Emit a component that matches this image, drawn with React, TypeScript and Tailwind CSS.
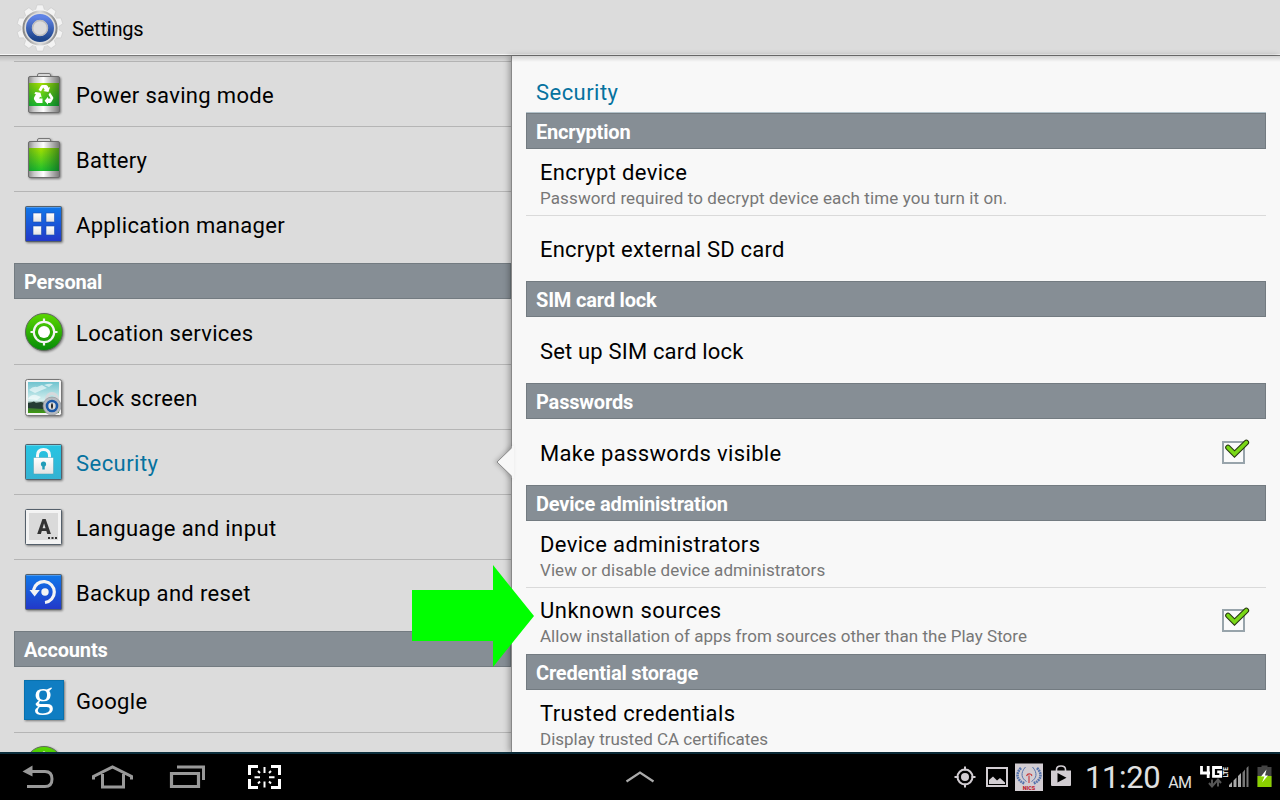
import type { ReactNode } from 'react';

const Shadow = ({ children }: { children: ReactNode }) => (
  <svg viewBox="0 0 44 48" className="h-12 w-11 shrink-0 overflow-visible drop-shadow-[1px_1px_1px_rgba(0,0,0,0.45)]">
    <defs>
      <linearGradient id="metal" x1="0" x2="1" y1="0" y2="0">
        <stop offset="0" stopColor="#8c8c8c" /><stop offset=".18" stopColor="#c9c9c9" /><stop offset=".48" stopColor="#fff" />
        <stop offset=".75" stopColor="#b5b5b5" /><stop offset="1" stopColor="#777" />
      </linearGradient>
      <linearGradient id="charge" x1="0" x2="0" y1="0" y2="1">
        <stop offset="0" stopColor="#a5e000" /><stop offset="1" stopColor="#1cc02c" />
      </linearGradient>
      <linearGradient id="chargeShade" x1="0" x2="1" y1="0" y2="0">
        <stop offset="0" stopColor="#063" stopOpacity=".35" /><stop offset=".4" stopColor="#063" stopOpacity="0" /><stop offset="1" stopColor="#042" stopOpacity=".55" />
      </linearGradient>
      <linearGradient id="blue" x1="0" x2="0" y1="0" y2="1">
        <stop offset="0" stopColor="#0f78ea" /><stop offset="1" stopColor="#2338c8" />
      </linearGradient>
      <linearGradient id="green" x1="0" x2="0" y1="0" y2="1">
        <stop offset="0" stopColor="#5bd800" /><stop offset="1" stopColor="#048a08" />
      </linearGradient>
      <linearGradient id="cyan" x1="0" x2="0" y1="0" y2="1">
        <stop offset="0" stopColor="#26c5e3" /><stop offset="1" stopColor="#35b2d2" />
      </linearGradient>
      <linearGradient id="white" x1="0" x2="0" y1="0" y2="1">
        <stop offset="0" stopColor="#fff" /><stop offset="1" stopColor="#e2e2e2" />
      </linearGradient>
      <linearGradient id="sky" x1="0" x2="0" y1="0" y2="1">
        <stop offset="0" stopColor="#6fc3cf" /><stop offset=".6" stopColor="#d8f0ef" /><stop offset=".72" stopColor="#3c5a49" /><stop offset="1" stopColor="#3f9c12" />
      </linearGradient>
    </defs>
    {children}
  </svg>
);

const BatteryIcon = ({ saver = false }: { saver?: boolean }) => (
  <Shadow>
    <path d="M15.500 5V3q0-1.500 1.500-1.500h10q1.500 0 1.500 1.500V5" fill="#d8d8d8" stroke="#777" />
    <rect x="6.500" y="4.500" width="31" height="36" rx="1.500" fill="url(#metal)" stroke="#6d6d6d" />
    <rect x="7" y="11" width="30" height="23" fill="url(#charge)" />
    <rect x="7" y="11" width="30" height="23" fill="url(#chargeShade)" />
    {saver && (
      <g fill="#fff">
        <path d="M16.500 18l2.300-4q.7-1 1.800-1h3.200q1.200 0 1.800 1l1 1.700 1.500-.8-1.700 5-5.200-1 1.600-.9-1.600-2.500-2.200 4z" />
        <path d="M28 20.500l3 4.400q.7 1 0 2.200l-1.700 2.900q-.6 1-1.800 1H26v1.700l-3.400-4L26 24.800v1.700h2.700l-2.200-3.800z" />
        <path d="M13.500 20l5 .7 1.200 4.900-1.600-.9-1 1.800h3.400v4.600h-5q-1.200 0-1.800-1l-1.600-2.700q-.5-1 .1-2.100l1.700-3-1.600-.9z" />
      </g>
    )}
  </Shadow>
);

const Tile = ({ fill, children }: { fill: string; children?: ReactNode }) => (
  <Shadow>
    <rect x="3.500" y="4.500" width="36" height="35" rx="1" fill={fill} stroke="#55606b" />
    <path d="M4.500 5.500h34" stroke="#fff" strokeOpacity=".25" />
    {children}
  </Shadow>
);

const AppsIcon = () => (
  <Tile fill="url(#blue)">
    <g fill="url(#white)" stroke="#1a4fb0" strokeWidth=".6">
      <rect x="11" y="11" width="8.500" height="9" /><rect x="24" y="11" width="8.500" height="9" />
      <rect x="11" y="24" width="8.500" height="9" /><rect x="24" y="24" width="8.500" height="9" />
    </g>
  </Tile>
);

const LocationIcon = () => (
  <Shadow>
    <circle cx="22" cy="22" r="18.500" fill="url(#green)" stroke="#5d6b5b" />
    <g fill="none" stroke="#f4f4f4" strokeWidth="2.200">
      <circle cx="22" cy="22" r="10.200" />
      <path d="M22 8.500v4M22 31.500v4M8.500 22h4M31.500 22h4" />
    </g>
    <circle cx="22" cy="22" r="6" fill="#fff" />
  </Shadow>
);

const LockScreenIcon = () => (
  <Shadow>
    <rect x="3.500" y="4.500" width="36" height="36" rx="2" fill="#f4f4f4" stroke="#777" />
    <rect x="6" y="7" width="31" height="31" fill="url(#sky)" />
    <g fill="#fff" fillOpacity=".6">
      <path d="M7 15q4-4 8-3l5-2 5 3-5 2-7 3z" /><path d="M6 24q3-5 8-4l5 2-4 3z" /><path d="M22 10q5-2 9-1l-4 3z" />
    </g>
    <path d="M6 28l3-.5 3-1 2 1.500 5-1 5 2 13 1v3l-16 1-15-1z" fill="#253c34" />
    <path d="M24.500 26v-2q1-5.500 5.500-5.500t5.500 5.500v2" fill="none" stroke="#d6d9dc" strokeWidth="3" />
    <circle cx="30" cy="31" r="9" fill="#b5b9be" stroke="#85898e" strokeWidth=".6" />
    <circle cx="30" cy="31" r="5" fill="#ddd" stroke="#1c59a8" strokeWidth="2.600" />
    <path d="M30 28.500v5M29 31h2" stroke="#222" strokeWidth="1.600" />
  </Shadow>
);

const SecurityIcon = () => (
  <Tile fill="url(#cyan)">
    <path d="M15.500 19v-3.500q0-6 6-6t6 6V19" fill="none" stroke="#f8f8f8" strokeWidth="3" />
    <rect x="11.500" y="17.500" width="20" height="16.500" rx="1" fill="url(#white)" stroke="#4a9fb3" strokeWidth=".5" />
    <circle cx="21.500" cy="24" r="2.600" fill="#209cb8" /><path d="M21.500 24v5.500" stroke="#209cb8" strokeWidth="2.400" />
  </Tile>
);

const LanguageIcon = () => (
  <Tile fill="#f3f3f3">
    <rect x="7" y="8" width="29" height="27" fill="#dadada" />
    <text x="22" y="29" textAnchor="middle" fontFamily="Roboto, sans-serif" fontWeight="900" fontSize="20" fill="#333">A</text>
    <path d="M26 33h2M29.500 33h2M33 33h2" stroke="#333" strokeWidth="2" />
  </Tile>
);

const BackupIcon = () => (
  <Tile fill="url(#blue)">
    <path d="M11.500 20a10.500 10.500 0 1 1 11.500 12.500" fill="none" stroke="#f4f4f4" strokeWidth="3.200" />
    <path d="M7.500 20h10.300l-5.200 6.500z" fill="#f4f4f4" /><circle cx="23" cy="22" r="3.700" fill="#f4f4f4" />
  </Tile>
);

const GoogleIcon = () => (
  <Shadow>
    <rect x="2.500" y="2.500" width="39" height="39" fill="#0f7dc2" stroke="#0871ad" />
    <text x="19.500" y="28.500" textAnchor="middle" fontFamily="Liberation Serif, serif" fontSize="37" fill="#fff" transform="scale(1.1 1)">g</text>
  </Shadow>
);

const GearIcon = () => (
  <svg viewBox="0 0 48 48" className="h-12 w-12">
    <defs>
      <linearGradient id="gearBlue" x1="0" x2="0" y1="0" y2="1"><stop offset="0" stopColor="#5f83e6" /><stop offset="1" stopColor="#1d458b" /></linearGradient>
      <linearGradient id="gearRim" x1="0" x2="1" y1="0" y2="0"><stop offset="0" stopColor="#888" /><stop offset=".5" stopColor="#dcdcdc" /><stop offset="1" stopColor="#888" /></linearGradient>
    </defs>
    <g fill="#f3f3f3" stroke="#c4c4c4" strokeWidth=".5">
      {[0, 36, 72, 108, 144, 180, 216, 252, 288, 324].map((a) => (
        <path key={a} d="M19 8l2-7h6l2 7z" transform={`rotate(${a} 24 24)`} />
      ))}
      <circle cx="24" cy="24" r="18.700" stroke="none" />
    </g>
    <circle cx="24" cy="24" r="16.600" fill="#ddd" stroke="url(#gearRim)" strokeWidth="2" />
    <circle cx="24" cy="24" r="11" fill="none" stroke="url(#gearBlue)" strokeWidth="6" />
    <circle cx="24" cy="24" r="7.500" fill="#dcdcdc" stroke="#bcbcbc" strokeWidth="1.500" />
  </svg>
);

const CheckBox = () => (
  <svg viewBox="0 0 30 28" className="mr-4 h-7 w-[30px] shrink-0">
    <rect x="3" y="4" width="21" height="21" fill="#fafafa" stroke="#98a4ab" strokeWidth="2" />
    <path d="M8 9.500l6.500 6.500L26.300 4.500" fill="none" stroke="#263311" strokeWidth="5.600" strokeLinecap="round" />
    <path d="M8 9.500l6.500 6.500L26.300 4.500" fill="none" stroke="#79d817" strokeWidth="3.600" strokeLinecap="round" />
  </svg>
);

type ItemProps = { icon: ReactNode; label: string; tracking?: string; active?: boolean; last?: boolean };

const NavItem = ({ icon, label, tracking = 'tracking-[0.33px]', active, last }: ItemProps) => (
  <li className={`flex shrink-0 items-start pl-2 ${last ? 'h-[71px]' : 'h-[65px] border-b border-[#b5b5b5]'}`}>
    <div className="mt-2.5 flex">{icon}</div>
    <span className={`ml-2.5 mt-[18px] whitespace-nowrap text-[22px] leading-8 ${tracking} ${active ? 'text-[#06729f]' : 'text-black'}`}>{label}</span>
  </li>
);

const Bar = ({ children }: { children: ReactNode }) => (
  <h3 className="h-9 shrink-0 border border-[#737b81] bg-[#868e95] pl-[9px] pt-px text-xl font-bold leading-[35px] tracking-[-0.18px] text-white">{children}</h3>
);

type RowProps = { title: string; detail?: string; checked?: boolean; divided?: boolean; tracking?: string; detailTracking?: string };

const Row = ({ title, detail, checked, divided, tracking = 'tracking-[0.35px]', detailTracking = 'tracking-[0.08px]' }: RowProps) => (
  <div className={`flex shrink-0 items-center justify-between pl-3.5 ${divided ? 'h-[67px] border-b border-[#dadada]' : 'h-[66px]'}`}>
    <div className={detail ? (checked ? 'pt-[3px]' : 'pt-[5px]') : 'pt-[3px]'}>
      <div className={`whitespace-nowrap text-[22px] leading-[28px] text-black ${tracking}`}>{title}</div>
      {detail && <div className={`-mt-px mb-px whitespace-nowrap text-[17px] leading-6 text-[#777] ${detailTracking}`}>{detail}</div>}
    </div>
    {checked && <div className={detail ? '-mt-0.5' : ''}><CheckBox /></div>}
  </div>
);

const SystemBar = () => (
  <footer className="flex h-12 shrink-0 items-center border-t-2 border-[#0c2f3d] bg-black text-[#e0e0e0]">
    <svg viewBox="0 0 300 46" className="h-[46px] w-[300px] shrink-0" fill="none" stroke="#999" strokeWidth="3">
      <path d="M27 17.500h18q7 0 7 7.500t-7 7.500H27" /><path d="M22.500 17.500l10-6v11z" fill="#999" stroke="none" />
      <path d="M93.500 25.500v-3L112.500 13l19 9.500v3M102.500 20v13h21V20" />
      <path d="M171.500 19.500h27v13h-27z" strokeWidth="3.200" /><path d="M177 13h26.500v13" />
      <g stroke="#fff"><path d="M249.500 21v-8.500h8.500M271 12.500h8.500V21M279.500 25v8.500H271M258 33.500h-8.500V25" />
        <path d="M264.500 13v6M264.500 27.500v6M254.500 23.200h5.500M269 23.200h5.500" strokeWidth="2" /><path d="M258 17l2 2M271 17l-2 2M258 29.500l2-2M271 29.500l-2-2" strokeWidth="2" />
      </g>
    </svg>
    <div className="flex flex-1">
      <svg viewBox="0 0 30 14" className="ml-[325px] h-3.5 w-[30px]" fill="none" stroke="#aaa" strokeWidth="2.200">
        <path d="M1.500 11.500L15 2.500l13.500 9" />
      </svg>
    </div>
    <svg viewBox="0 0 130 46" className="h-[46px] w-[130px] shrink-0" fill="none" stroke="#d2cdd2" strokeWidth="2">
      <circle cx="15" cy="23" r="7.500" /><circle cx="15" cy="23" r="4" fill="#d2cdd2" stroke="none" /><path d="M15 12.500v4M15 29.500v4M4.500 23h4M21.500 23h4" />
      <path d="M37 14h20v18H37z" /><path d="M39 30v-4l4-3.500 4 4 3-2.500 5 4.500V30z" fill="#d2cdd2" stroke="none" />
      <rect x="65" y="9.500" width="28" height="27.500" fill="#d2cdd2" stroke="none" />
      <g stroke="#5573ad"><path d="M71 14c-6 6-4 13 4 15.500M87 14c6 6 4 13-4 15.500" strokeWidth="2.600" strokeDasharray="1.800 .7" /><path d="M75.500 13c-5.500 6-4 11.500 1 14.500M82.500 13c5.500 6 4 11.500-1 14.500" strokeWidth="1" /></g>
      <path d="M76.500 22q1-2.500 3.500-2t1.500 2M79 21.500V29" stroke="#c83639" strokeWidth="1.100" />
      <text x="79" y="35.500" textAnchor="middle" fontFamily="Roboto, sans-serif" fontSize="5.500" fontWeight="900" fill="#c01d2e" stroke="none">NICS</text>
      <path d="M101 16.500h20v14.500q0 1-1 1h-18q-1 0-1-1z" fill="#d2cdd2" stroke="none" /><path d="M106.500 17v-1.500q0-3.500 4.500-3.500t4.500 3.500V17" strokeWidth="1.600" /><path d="M107.500 19v9.500l9-4.700z" fill="#000" stroke="none" />
    </svg>
    <div className="flex h-[46px] w-[110px] shrink-0 items-baseline pl-[5px]">
      <span className="relative top-px whitespace-nowrap text-[31px] leading-[46px] tracking-[-0.4px]">11:20</span>
      <span className="relative top-px ml-2 text-base tracking-[-0.7px]">AM</span>
    </div>
    <svg viewBox="0 0 90 46" className="h-[46px] w-[90px] shrink-0">
      <path d="M11.500 12v7h8.500M18.200 12v12M32 13.500h-8.500v8.800h7.200v-4.500h-3.500" fill="none" stroke="#fff" strokeWidth="2.800" />
      <text transform="translate(37.500 23.500) rotate(-90)" fontFamily="Roboto, sans-serif" fontSize="6.500" fontWeight="700" fill="#fff">LTE</text>
      <path d="M22 25.500v6M19 29l3 3.500 3-3.500M28 32.500v-6M25 29l3-3.500 3 3.500" stroke="#555" strokeWidth="2" fill="none" />
      <g fill="#aaa"><path d="M39 31l3-3v5h-3zM43.500 26.500l3-3V33h-3zM48 22l3-3v14h-3z" /><path d="M52.500 18.500l2.500-3V33h-2.500zM56.500 14l2-2v21h-2z" fill="#777" /></g>
      <path d="M67.500 13h4v-1.500h6V13h4v20h-14z" fill="#444" /><path d="M67.500 22h14v11h-14z" fill="#8bd000" />
      <path d="M76.500 15.500l-5.500 7h3.500L72 28.500l6-7H75z" fill="#fff" />
    </svg>
  </footer>
);

export default function App() {
  return (
    <div className="flex h-[800px] w-[1280px] flex-col overflow-hidden bg-[#dcdcdc] font-['Roboto','Noto_Sans',sans-serif]">
      <header className="flex h-14 shrink-0 items-center border-b border-[#777] bg-[#dcdcdc] pl-4 shadow-[inset_0_-1px_0_#f6f6f6]">
        <GearIcon />
        <h1 className="ml-2 mt-[3px] text-xl tracking-[-0.2px] text-black">Settings</h1>
      </header>
      <main className="relative flex min-h-0 flex-1">
        <div className="pointer-events-none absolute inset-x-0 top-0 z-10 h-1.5 bg-gradient-to-b from-black/15 to-transparent" />
        <nav className="flex w-[511px] shrink-0 flex-col overflow-hidden pl-3.5">
          <div className="h-1.5 shrink-0 border-b border-[#b5b5b5]" />
          <ul className="shrink-0">
            <NavItem icon={<BatteryIcon saver />} label="Power saving mode" />
            <NavItem icon={<BatteryIcon />} label="Battery" tracking="tracking-[0.2px]" />
            <NavItem icon={<AppsIcon />} label="Application manager" last />
          </ul>
          <Bar>Personal</Bar>
          <ul className="mt-px shrink-0">
            <NavItem icon={<LocationIcon />} label="Location services" />
            <NavItem icon={<LockScreenIcon />} label="Lock screen" />
            <NavItem icon={<SecurityIcon />} label="Security" tracking="tracking-[0.45px]" active />
            <NavItem icon={<LanguageIcon />} label="Language and input" tracking="tracking-[0.42px]" />
            <NavItem icon={<BackupIcon />} label="Backup and reset" last />
          </ul>
          <Bar>Accounts</Bar>
          <ul className="mt-px shrink-0">
            <NavItem icon={<GoogleIcon />} label="Google" />
            <NavItem icon={<LocationIcon />} label="" />
          </ul>
        </nav>
        <section className="flex min-w-0 flex-1 flex-col overflow-hidden border-l border-[#888] bg-[#f8f8f8] px-3.5 shadow-[-2px_0_6px_rgba(0,0,0,0.3)]">
          <h2 className="h-[57px] shrink-0 border-b border-[#b3c2ca] pl-2.5 pt-[21px] text-[22px] leading-8 tracking-[0.45px] text-[#06729f]">Security</h2>
          <Bar>Encryption</Bar>
          <Row title="Encrypt device" detail="Password required to decrypt device each time you turn it on." detailTracking="tracking-[0.12px]" divided />
          <div className="-mt-px flex shrink-0 flex-col"><Row title="Encrypt external SD card" tracking="tracking-[0.23px]" /></div>
          <Bar>SIM card lock</Bar>
          <Row title="Set up SIM card lock" tracking="tracking-[0.17px]" />
          <Bar>Passwords</Bar>
          <Row title="Make passwords visible" checked />
          <Bar>Device administration</Bar>
          <Row title="Device administrators" detail="View or disable device administrators" divided />
          <Row title="Unknown sources" tracking="tracking-[0.5px]" detail="Allow installation of apps from sources other than the Play Store" detailTracking="tracking-[0.03px]" checked />
          <Bar>Credential storage</Bar>
          <Row title="Trusted credentials" tracking="tracking-[0.4px]" detail="Display trusted CA certificates" detailTracking="tracking-normal" />
        </section>
        <svg viewBox="0 0 18 34" className="absolute left-[496px] top-[389px] h-[34px] w-[18px] drop-shadow-[-2px_0_2px_rgba(0,0,0,0.2)]">
          <path d="M17 1.500L1 17l16 15.500" fill="#f8f8f8" stroke="#888" /><path d="M15.800 1h3v32h-3z" fill="#f8f8f8" />
        </svg>
        <svg viewBox="0 0 122 102" className="absolute left-[412px] top-[509px] z-20 h-[102px] w-[122px]"><path d="M0 25h81V0l41 51-41 51V76H0z" fill="#0f0" /></svg>
      </main>
      <SystemBar />
    </div>
  );
}
